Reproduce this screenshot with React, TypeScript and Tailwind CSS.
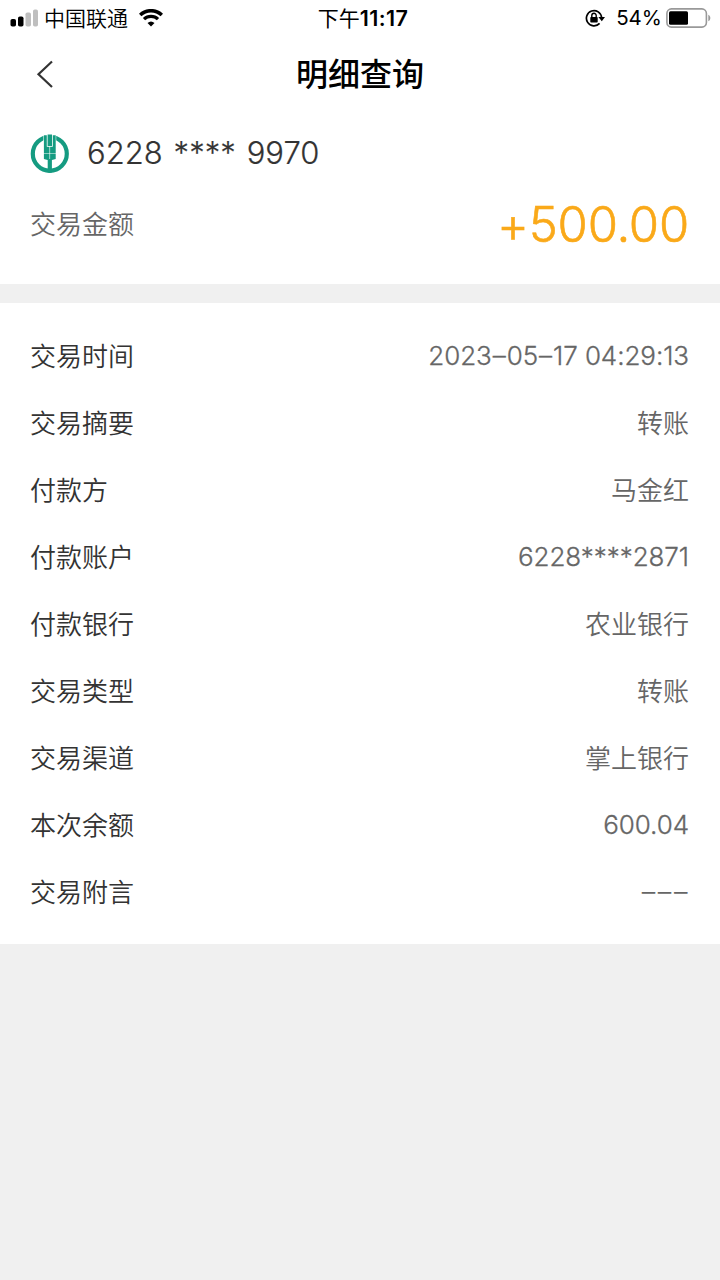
import type { ReactNode } from "react";

const rows: { label: string; value: ReactNode; numeric?: boolean }[] = [
  {
    label: "交易时间",
    value: (
      <>
        2023<span className="mx-[1px]">–</span>05<span className="mx-[1px]">–</span>17 04:29:13
      </>
    ),
    numeric: true,
  },
  { label: "交易摘要", value: "转账" },
  { label: "付款方", value: "马金红" },
  { label: "付款账户", value: "6228****2871", numeric: true },
  { label: "付款银行", value: "农业银行" },
  { label: "交易类型", value: "转账" },
  { label: "交易渠道", value: "掌上银行" },
  { label: "本次余额", value: "600.04", numeric: true },
  { label: "交易附言", value: <span className="mr-[-1px] text-[27px] tracking-[2.6px]">–––</span> },
];

function StatusBar() {
  return (
    <div className="grid h-9 grid-cols-[1fr_auto_1fr] items-center pl-[10px] pr-[9px] text-black">
      <div className="flex h-9 items-center">
        <svg className="h-[18px] w-7" viewBox="0 0 28 18">
          <rect x="0.5" y="10" width="5.5" height="7.5" rx="1.8" />
          <rect x="8" y="7.5" width="5.5" height="10" rx="1.8" />
          <rect x="15.5" y="3.5" width="5.5" height="14" rx="1.8" fill="#bfbfbf" />
          <rect x="23" y="0.5" width="5" height="17" rx="1.8" fill="#bfbfbf" />
        </svg>
        <span className="ml-[6px] h-9 pt-px text-[21px] font-[350] leading-9">中国联通</span>
        <svg className="ml-[11px] h-[18px] w-6" viewBox="0 0 24 18" fill="none" stroke="#000">
          <path d="M1.2 6A15.6 15.6 0 0 1 22.8 6" strokeWidth="3.5" />
          <path d="M5 10.2A10 10 0 0 1 19 10.2" strokeWidth="3.2" />
          <path d="M12 17.4L8.5 14A5.2 5.2 0 0 1 15.5 14Z" fill="#000" stroke="none" />
        </svg>
      </div>
      <div className="flex h-9 items-center pl-[5px] text-[21px] leading-9">
        <span className="h-9 pt-px">下午</span>
        <span className="h-9 text-[21.5px] font-semibold tracking-[0.4px]">11:17</span>
      </div>
      <div className="flex h-9 items-center justify-end">
        <svg className="h-[18px] w-5" viewBox="0 0 20 18" fill="none" stroke="#000" strokeWidth="1.7">
          <path d="M14.6 14.4A7.6 7.6 0 1 1 16.6 8.6" />
          <path d="M13.4 8H20L16.8 12.2Z" fill="#000" stroke="none" />
          <rect x="5.3" y="8" width="7.4" height="5.6" rx="0.8" fill="#000" stroke="none" />
          <path d="M6.8 8.3V6.5a2.2 2.2 0 0 1 4.4 0v1.8" strokeWidth="1.4" />
        </svg>
        <span className="ml-[11px] h-9 text-[20.5px] leading-9">54%</span>
        <svg className="ml-1 h-5 w-[45px]" viewBox="0 0 45 20">
          <rect x="0.9" y="0.9" width="39.5" height="18.2" rx="4.5" fill="none" stroke="#999" strokeWidth="1.6" />
          <rect x="3" y="3.2" width="19" height="13.6" rx="1.5" />
          <path d="M42.3 6.7c2.7 1.3 2.7 5.3 0 6.6Z" fill="#999" />
        </svg>
      </div>
    </div>
  );
}

function BankLogo() {
  return (
    <svg className="h-10 w-10" viewBox="0 0 40 40">
      <circle cx="19.8" cy="19.8" r="17" fill="#fff" stroke="#159b81" strokeWidth="4.2" />
      <rect x="13.4" y="0" width="12.8" height="9" fill="#fff" />
      <path
        fill="#159b81"
        d="M13.9 1.2h2.9v11.6h-2.9zM17.6 0.6h4.4v11.5h-4.4zM22.8 1.2h2.9v11.6h-2.9zM13.9 12.8h5.6v6.2h-5.6zM20.1 12.8h5.6v6.2h-5.6zM13.9 19.6h5.6v6.4h-1.9l-3.7-1zM20.1 19.6h5.6v5.4l-3.7 1h-1.9zM17.7 25h4.2v13.6h-4.2z"
      />
    </svg>
  );
}

export default function App() {
  return (
    <div className="flex min-h-[1280px] w-full flex-col bg-[#f0f0f0] font-['Inter','Noto_Sans_CJK_SC',sans-serif]">
      <header className="bg-white">
        <StatusBar />
        <div className="grid h-[76px] grid-cols-[1fr_auto_1fr] items-center px-9">
          <svg className="h-7 w-[18px]" viewBox="0 0 18 28" fill="none" stroke="#333" strokeWidth="2.2">
            <path d="M16 1.5L2.5 14.2L16 27" />
          </svg>
          <h1 className="h-[76px] pt-px text-[32px] font-medium leading-[76px] text-black">明细查询</h1>
          <span />
        </div>
      </header>
      <section className="flex h-[172px] flex-col bg-white pl-[30px] pr-[31px]">
        <div className="flex h-[82px] items-center gap-[17px] pt-px">
          <BankLogo />
          <span className="text-[31px] font-[350] tracking-[0.05px] text-[#333] [-webkit-text-stroke:0.2px] [word-spacing:2px]">
            6228 **** 9970
          </span>
        </div>
        <div className="flex h-[60px] items-center justify-between">
          <span className="pt-px text-[26px] font-[350] text-[#666]">交易金额</span>
          <span className="pt-px text-[49px] font-light tracking-[-0.2px] text-[#faa919] [-webkit-text-stroke:0.6px] [font-feature-settings:'calt'_0]">
            +500.00
          </span>
        </div>
      </section>
      <section className="mt-[19px] flex h-[641px] flex-col bg-white pl-[30px] pr-[31px] pt-5">
        {rows.map((row) => (
          <div key={row.label} className="flex h-[67px] items-center justify-between text-[26px] font-[350]">
            <span className="text-[#333]">{row.label}</span>
            <span
              className={
                row.numeric
                  ? "pb-0.5 font-light tracking-[-0.07px] text-[#666] [-webkit-text-stroke:0.3px] [font-feature-settings:'calt'_0]"
                  : "text-[#666]"
              }
            >
              {row.value}
            </span>
          </div>
        ))}
      </section>
    </div>
  );
}
